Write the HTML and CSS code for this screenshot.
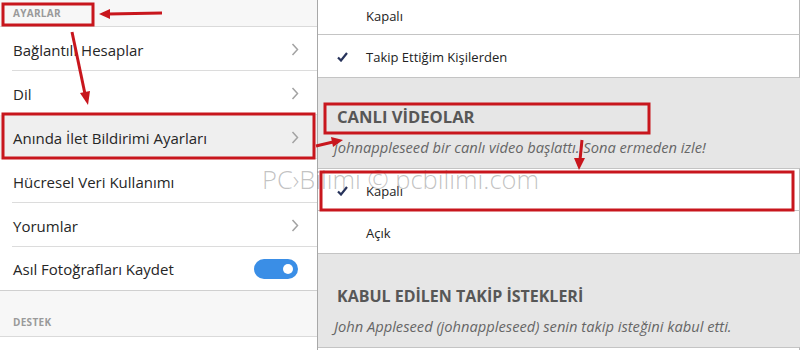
FILE: index.html
```html
<!DOCTYPE html>
<html>
<head>
    <meta charset="UTF-8">
    <title>Anında İlet Bildirimi Ayarları</title>
    <link rel="stylesheet" href="styles.css">
</head>
<body>
    <div class="page">
        <aside class="settings">
            <div class="section-head">AYARLAR</div>
            <div class="row">Bağlantılı Hesaplar <svg class="chev" width="8" height="13" viewBox="0 0 8 13"><path d="M1.5 1 L6.5 6.5 L1.5 12"/></svg></div>
            <div class="row">Dil <svg class="chev" width="8" height="13" viewBox="0 0 8 13"><path d="M1.5 1 L6.5 6.5 L1.5 12"/></svg></div>
            <div class="row active">Anında İlet Bildirimi Ayarları <svg class="chev" width="8" height="13" viewBox="0 0 8 13"><path d="M1.5 1 L6.5 6.5 L1.5 12"/></svg></div>
            <div class="row">Hücresel Veri Kullanımı</div>
            <div class="row">Yorumlar <svg class="chev" width="8" height="13" viewBox="0 0 8 13"><path d="M1.5 1 L6.5 6.5 L1.5 12"/></svg></div>
            <div class="row last">Asıl Fotoğrafları Kaydet <span class="toggle"><span class="knob"></span></span></div>
            <div class="section-head tall">DESTEK</div>
        </aside>

        <section class="notif">
            <div class="opt first"><span class="tick"></span>Kapalı</div>
            <div class="opt"><span class="tick"><svg width="11" height="10" viewBox="0 0 11 10"><path d="M1 5.5 L4 8.5 L10 1" fill="none" stroke="#27335b" stroke-width="2.2"/></svg></span>Takip Ettiğim Kişilerden</div>

            <div class="group">
                <h2>CANLI VİDEOLAR</h2>
                <p>johnappleseed bir canlı video başlattı. Sona ermeden izle!</p>
            </div>
            <div class="opt top"><span class="tick"><svg width="11" height="10" viewBox="0 0 11 10"><path d="M1 5.5 L4 8.5 L10 1" fill="none" stroke="#27335b" stroke-width="2.2"/></svg></span>Kapalı</div>
            <div class="opt"><span class="tick"></span>Açık</div>

            <div class="group second">
                <h2 class="wide">KABUL EDİLEN TAKİP İSTEKLERİ</h2>
                <p>John Appleseed (johnappleseed) senin takip isteğini kabul etti.</p>
            </div>
            <div class="opt top"></div>
        </section>

        <div class="watermark">PC›Bilimi © pcbilimi.com</div>

        <!-- kirmizi isaretler -->
        <svg class="marks" width="800" height="350" viewBox="0 0 800 350">
            <g fill="none" stroke="#c8161d" stroke-width="3">
                <rect x="3" y="4" width="90" height="21"/>
                <rect x="3" y="114" width="311" height="44"/>
                <rect x="325" y="104" width="324" height="29"/>
                <rect x="321" y="172" width="472" height="38"/>
                <line x1="162" y1="13" x2="108" y2="14"/>
                <line x1="72" y1="32" x2="85" y2="94"/>
                <line x1="316" y1="146" x2="333" y2="142"/>
                <line x1="582" y1="140" x2="580" y2="160"/>
            </g>
            <g fill="#c8161d">
                <polygon points="99,14 110,9 110,19"/>
                <polygon points="88,105 80,93 90,91"/>
                <polygon points="343,140 331,137 333,147"/>
                <polygon points="579,170 574,158 585,158"/>
            </g>
        </svg>
    </div>
</body>
</html>
```

FILE: styles.css
```css
body {
    margin: 0;
    font-family: "Open Sans", "Noto Sans", sans-serif;
    background-color: #fff;
    overflow: hidden;
}
.page {
    position: relative;
    display: flex;
    width: 800px;
    height: 350px;
    overflow: hidden;
}
.settings {
    width: 317px;
    flex: none;
    background-color: #fff;
}
.section-head {
    height: 27px;
    box-sizing: border-box;
    display: flex;
    align-items: center;
    padding-left: 13px;
    background-color: #f7f7f7;
    border-bottom: 1px solid #dadada;
    color: #9a9a9a;
    font-size: 10px;
    font-weight: bold;
    letter-spacing: 0.3px;
}
.section-head.tall {
    height: 46px;
    align-items: flex-end;
    padding-bottom: 7px;
}
.row {
    height: 44px;
    box-sizing: border-box;
    display: flex;
    align-items: center;
    justify-content: space-between;
    padding: 1px 18px 0 13px;
    font-size: 15px;
    color: #262626;
    background: linear-gradient(#dcdcdc, #dcdcdc) no-repeat 12px 100% / calc(100% - 12px) 1px;
}
.row.active {
    background-color: #efefef;
}
.row.last {
    background: none;
    border-bottom: 1px solid #d0d0d0;
}
.chev {
    fill: none;
    stroke: #a3a3a3;
    stroke-width: 1.5;
}
.toggle {
    display: flex;
    justify-content: flex-end;
    align-items: center;
    width: 44px;
    height: 20px;
    box-sizing: border-box;
    padding-right: 5px;
    margin-right: 1px;
    border-radius: 10px;
    background-color: #3a8ee6;
}
.knob {
    width: 10px;
    height: 10px;
    border-radius: 50%;
    background-color: #fff;
}
.notif {
    flex: 1;
    background-color: #e6e6e6;
    border-left: 1px solid #a8a8a8;
}
.opt {
    height: 43px;
    box-sizing: border-box;
    display: flex;
    align-items: center;
    padding-top: 2px;
    background-color: #fff;
    border-bottom: 1px solid #c4c4c4;
    border-right: 1px solid #b8b8b8;
    font-size: 13px;
    color: #222;
}
.opt.first {
    height: 35px;
    padding: 0 0 3px;
}
.opt.top {
    border-top: 1px solid #c4c4c4;
}
.tick {
    width: 48px;
    flex: none;
    display: flex;
    justify-content: center;
    box-sizing: border-box;
}
.group {
    padding: 29px 0 11px 19px;
}
.group.second {
    padding-top: 32px;
}
.group h2 {
    margin: 0;
    font-size: 16.6px;
    line-height: 20px;
    font-weight: bold;
    color: #575757;
}
.group h2.wide {
    font-size: 16px;
}
.group p {
    margin: 10px 0 0 -3px;
    font-size: 14.7px;
    line-height: 20px;
    font-style: italic;
    color: #666;
}
.watermark {
    position: absolute;
    left: 262px;
    top: 162px;
    font-size: 25.5px;
    font-weight: 300;
    color: rgba(120, 120, 120, 0.45);
    white-space: nowrap;
}
.marks {
    position: absolute;
    left: 0;
    top: 0;
}
```
